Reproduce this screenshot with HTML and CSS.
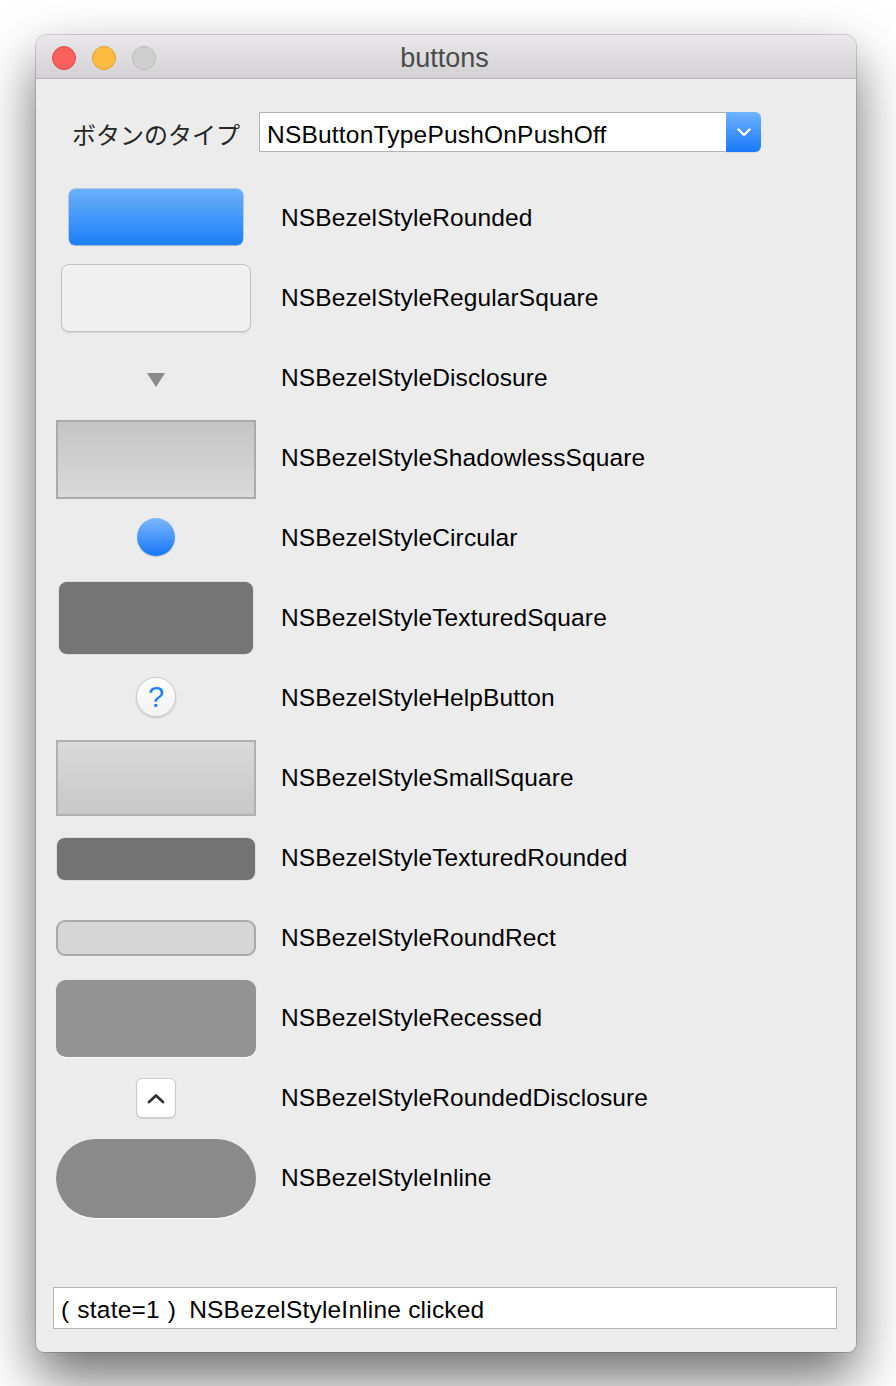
FILE: index.html
```html
<!DOCTYPE html>
<html lang="ja">
<head>
<meta charset="utf-8">
<title>buttons</title>
<link rel="stylesheet" href="styles.css">
</head>
<body>
<div class="window">
  <div class="titlebar">
    <div class="lights">
      <span class="light red"></span>
      <span class="light yellow"></span>
      <span class="light grey"></span>
    </div>
    <div class="title">buttons</div>
  </div>
  <div class="content">
    <div class="header">
      <span class="type-label">ボタンのタイプ</span>
      <div class="popup">
        <span class="popup-text">NSButtonTypePushOnPushOff</span>
        <span class="popup-arrow">
          <svg width="14" height="9" viewBox="0 0 14 9"><path d="M1.5 1.5 L7 7 L12.5 1.5" fill="none" stroke="#fff" stroke-width="2.4" stroke-linecap="round" stroke-linejoin="round"/></svg>
        </span>
      </div>
    </div>
    <div class="rows">
      <div class="row"><div class="ctl"><div class="b-rounded"></div></div><div class="lbl">NSBezelStyleRounded</div></div>
      <div class="row"><div class="ctl"><div class="b-regular"></div></div><div class="lbl">NSBezelStyleRegularSquare</div></div>
      <div class="row"><div class="ctl"><svg class="b-disclosure" width="18" height="14" viewBox="0 0 18 14"><path d="M0 0 H18 L9 14 Z" fill="#8a8a8a"/></svg></div><div class="lbl">NSBezelStyleDisclosure</div></div>
      <div class="row"><div class="ctl"><div class="b-shadowless"></div></div><div class="lbl">NSBezelStyleShadowlessSquare</div></div>
      <div class="row"><div class="ctl"><div class="b-circular"></div></div><div class="lbl">NSBezelStyleCircular</div></div>
      <div class="row"><div class="ctl"><div class="b-textured-sq"></div></div><div class="lbl">NSBezelStyleTexturedSquare</div></div>
      <div class="row"><div class="ctl"><div class="b-help">?</div></div><div class="lbl">NSBezelStyleHelpButton</div></div>
      <div class="row"><div class="ctl"><div class="b-small"></div></div><div class="lbl">NSBezelStyleSmallSquare</div></div>
      <div class="row"><div class="ctl"><div class="b-textured-rd"></div></div><div class="lbl">NSBezelStyleTexturedRounded</div></div>
      <div class="row"><div class="ctl"><div class="b-roundrect"></div></div><div class="lbl">NSBezelStyleRoundRect</div></div>
      <div class="row"><div class="ctl"><div class="b-recessed"></div></div><div class="lbl">NSBezelStyleRecessed</div></div>
      <div class="row"><div class="ctl"><div class="b-rdisc"><svg width="18" height="11" viewBox="0 0 18 11"><path d="M2 9 L9 2.5 L16 9" fill="none" stroke="#333" stroke-width="2.8" stroke-linecap="round" stroke-linejoin="round"/></svg></div></div><div class="lbl">NSBezelStyleRoundedDisclosure</div></div>
      <div class="row"><div class="ctl"><div class="b-inline"></div></div><div class="lbl">NSBezelStyleInline</div></div>
    </div>
    <div class="status"><span class="paren">(&nbsp;state=1&nbsp;)</span>NSBezelStyleInline clicked</div>
  </div>
</div>
</body>
</html>
```

FILE: styles.css
```css
html, body {
  margin: 0;
  padding: 0;
}
body {
  width: 896px;
  height: 1386px;
  background: #ffffff;
  font-family: "Liberation Sans", Arial, sans-serif;
  overflow: hidden;
}
.window {
  margin: 35px 0 0 36px;
  width: 820px;
  height: 1317px;
  border-radius: 11px 11px 8px 8px;
  background: #ececec;
  box-shadow: 0 0 0 1px rgba(0,0,0,0.16), 0 26px 55px rgba(0,0,0,0.58);
  overflow: hidden;
  display: flex;
  flex-direction: column;
}
.titlebar {
  height: 43px;
  flex: none;
  border-bottom: 1px solid #b8b6b8;
  background: linear-gradient(#e9e7e9, #d3d1d3);
  display: flex;
  align-items: center;
  position: relative;
}
.lights {
  display: flex;
  gap: 16px;
  padding-left: 16px;
  padding-top: 3px;
}
.light {
  width: 24px;
  height: 24px;
  border-radius: 50%;
  box-sizing: border-box;
}
.red { background: #fc605c; border: 1px solid #de4a45; }
.yellow { background: #fdbc40; border: 1px solid #de9f34; }
.grey { background: #d0cfd0; border: 1px solid #b9b8b9; }
.title {
  position: absolute;
  left: 0;
  right: 0;
  top: 0;
  bottom: 0;
  display: flex;
  align-items: center;
  justify-content: center;
  font-size: 27px;
  color: #4b4b4b;
  padding-top: 4px;
  padding-right: 3px;
  pointer-events: none;
}
.content {
  flex: 1;
  display: flex;
  flex-direction: column;
  padding: 33px 19px 0 20px;
}
.header {
  display: flex;
  align-items: center;
  height: 40px;
  padding-left: 16px;
  gap: 19px;
  margin-bottom: 25px;
}
.type-label {
  font-family: "Noto Sans CJK JP", sans-serif;
  font-size: 24px;
  color: #262626;
  padding-top: 3px;
}
.popup {
  width: 502px;
  height: 40px;
  display: flex;
  box-sizing: border-box;
}
.popup-text {
  flex: 1;
  background: #fff;
  border: 1px solid #b3b3b3;
  border-right: none;
  font-size: 24.5px;
  letter-spacing: 0.2px;
  color: #000;
  display: flex;
  align-items: center;
  padding-left: 7px;
  padding-top: 5px;
}
.popup-arrow {
  width: 35px;
  border-radius: 0 6px 6px 0;
  background: linear-gradient(#6fb3fb, #1879fa);
  display: flex;
  align-items: center;
  justify-content: center;
  box-shadow: 0 1px 0 rgba(0,0,0,0.08);
}
.rows {
  display: flex;
  flex-direction: column;
}
.row {
  height: 80px;
  display: flex;
  align-items: center;
  gap: 25px;
}
.ctl {
  width: 200px;
  height: 80px;
  display: flex;
  align-items: center;
  justify-content: center;
}
.lbl {
  font-size: 24.5px;
  letter-spacing: 0.12px;
  color: #000;
  padding-top: 2px;
}
.b-rounded {
  width: 174px;
  height: 56px;
  border-radius: 6px;
  background: linear-gradient(#6cb0f8, #1a7ff9);
  box-shadow: 0 0 0 0.5px rgba(20,100,220,0.5), 0 1px 1px rgba(0,0,0,0.15);
}
.b-regular {
  width: 190px;
  height: 68px;
  box-sizing: border-box;
  border-radius: 8px;
  background: #f0f0f0;
  border: 1px solid #c2c2c2;
  box-shadow: 0 1px 1px rgba(0,0,0,0.12);
  margin-top: 2px;
}
.b-disclosure {
  display: block;
  margin-top: 5px;
}
.b-shadowless {
  width: 200px;
  height: 79px;
  box-sizing: border-box;
  border: 2px solid #ababab;
  background: linear-gradient(#c5c5c5, #d9d9d9);
  margin-top: 4px;
}
.b-circular {
  width: 38px;
  height: 38px;
  border-radius: 50%;
  background: linear-gradient(#7cb8fb, #1676f9);
  box-shadow: 0 1px 1px rgba(0,0,0,0.2);
}
.b-textured-sq {
  width: 194px;
  height: 72px;
  border-radius: 8px;
  background: #757575;
  box-shadow: 0 0 0 0.5px rgba(0,0,0,0.15);
  margin-top: 2px;
}
.b-help {
  width: 40px;
  height: 40px;
  box-sizing: border-box;
  border-radius: 50%;
  background: linear-gradient(#fdfdfd, #f2f2f2);
  border: 1px solid #cacaca;
  box-shadow: 0 1px 2px rgba(0,0,0,0.18);
  color: #1a7ff9;
  font-size: 29px;
  display: flex;
  align-items: center;
  justify-content: center;
  padding-top: 1px;
}
.b-small {
  width: 200px;
  height: 76px;
  box-sizing: border-box;
  border: 2px solid #b0b0b0;
  background: linear-gradient(#d9d9d9, #c8c8c8);
  margin-top: 2px;
}
.b-textured-rd {
  width: 198px;
  height: 42px;
  border-radius: 8px;
  background: #737373;
  box-shadow: 0 0 0 0.5px rgba(0,0,0,0.15);
  margin-top: 3px;
}
.b-roundrect {
  width: 200px;
  height: 36px;
  box-sizing: border-box;
  border-radius: 9px;
  border: 2px solid #a9a9a9;
  background: #d6d6d6;
  margin-top: 2px;
}
.b-recessed {
  width: 200px;
  height: 77px;
  border-radius: 10px;
  background: #939393;
  box-shadow: 0 1px 1px rgba(255,255,255,0.9), 0 0 1px rgba(0,0,0,0.2);
  margin-top: 2px;
}
.b-rdisc {
  width: 40px;
  height: 40px;
  box-sizing: border-box;
  border-radius: 6px;
  background: #ffffff;
  border: 1px solid #c9c9c9;
  box-shadow: 0 1px 1px rgba(0,0,0,0.12);
  display: flex;
  align-items: center;
  justify-content: center;
  margin-top: 2px;
}
.b-inline {
  width: 200px;
  height: 79px;
  border-radius: 40px;
  background: #8a8a8a;
  box-shadow: 0 1px 1px rgba(255,255,255,0.9);
  margin-top: 2px;
}
.status {
  margin-top: 70px;
  width: 784px;
  height: 42px;
  box-sizing: border-box;
  background: #ffffff;
  border: 1px solid #b5b5b5;
  font-size: 24.5px;
  letter-spacing: 0.2px;
  color: #000;
  display: flex;
  align-items: center;
  padding-left: 7px;
  padding-top: 3px;
  margin-left: -3px;
}
.paren {
  margin-right: 13px;
  word-spacing: 1px;
}
```
